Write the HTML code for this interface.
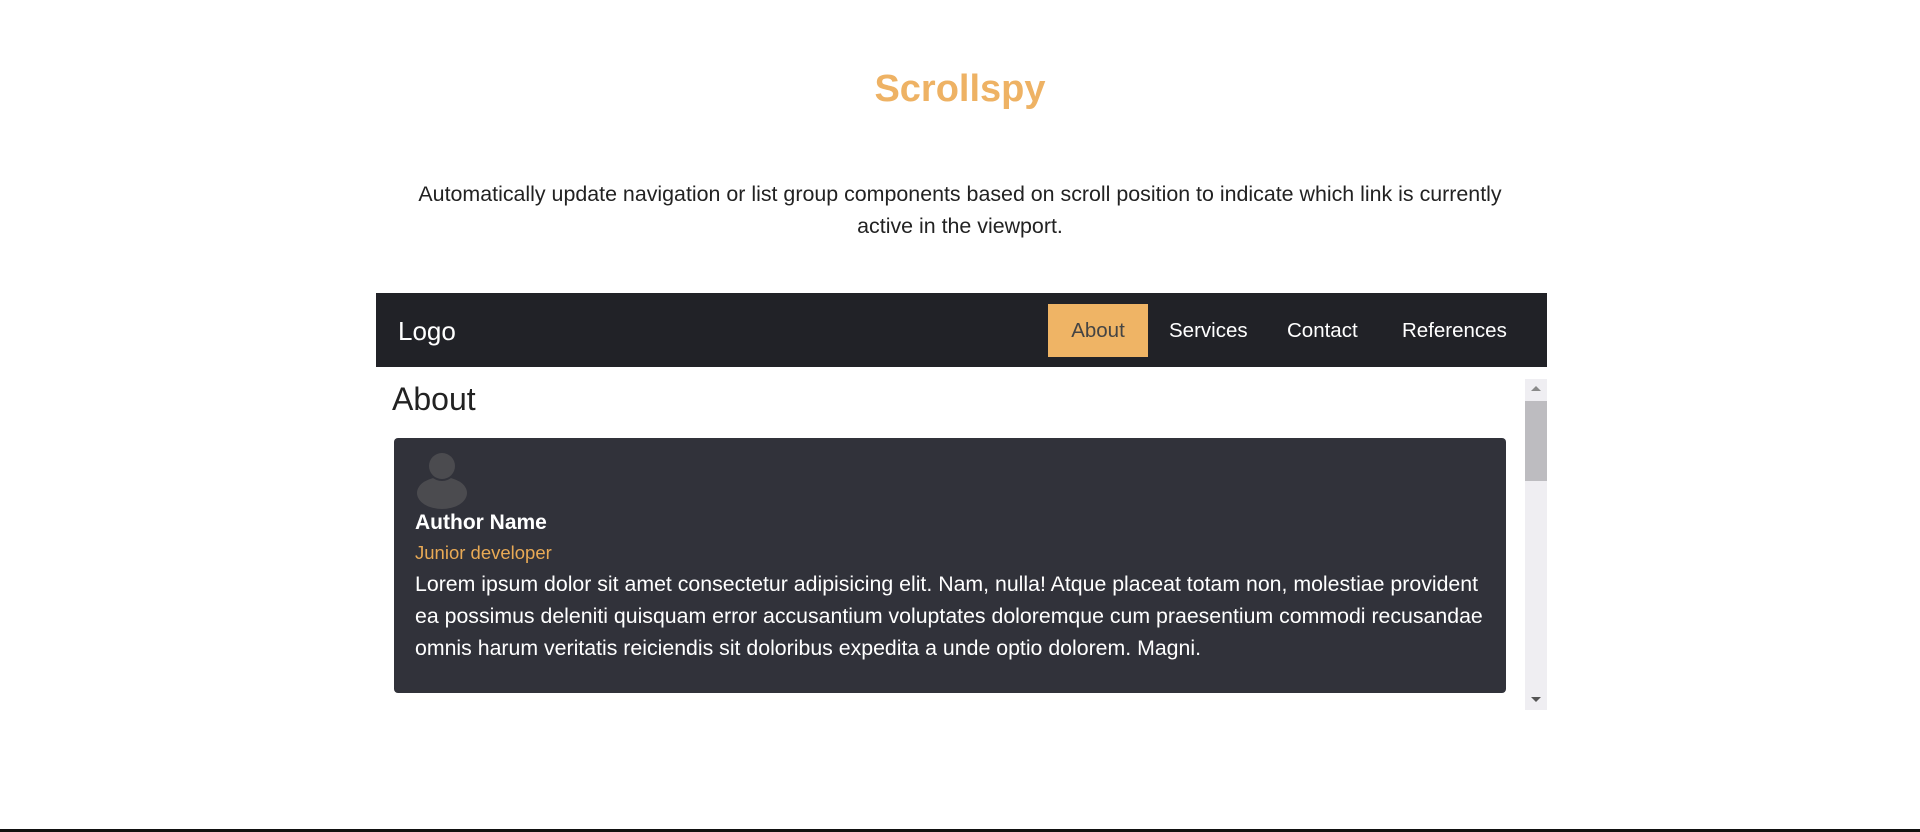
<!DOCTYPE html>
<html><head><meta charset="utf-8"><style>
*{margin:0;padding:0;box-sizing:border-box}
body{width:1920px;height:832px;background:#fff;font-family:"Liberation Sans",sans-serif;position:relative;overflow:hidden;color:#212529}
.a{position:absolute;white-space:nowrap}
h1{position:absolute;left:0;width:1920px;text-align:center;top:68px;font-size:38px;font-weight:bold;color:#eeb264}
.p{left:0;width:1920px;text-align:center;font-size:21.4px;line-height:32px;top:178px;color:#222}
.nav{position:absolute;left:376px;top:293px;width:1171px;height:74px;background:#212227}
.nav span{position:absolute;top:1px;line-height:74px;font-size:20.5px;color:#fff}
.btn{position:absolute;left:672px;top:11px;width:100px;height:53px;background:#efb465;color:#444;font-size:20.5px;line-height:53px;text-align:center}
.card{position:absolute;left:394px;top:438px;width:1112px;height:255px;background:#31323a;border-radius:4px}
.sb{position:absolute;left:1525px;top:379px;width:22px;height:331px;background:#efeef2}
.th{position:absolute;left:1525px;top:401px;width:22px;height:80px;background:#bdbcc0}
</style></head><body>
<h1>Scrollspy</h1>
<div class="a p">Automatically update navigation or list group components based on scroll position to indicate which link is currently<br>active in the viewport.</div>
<div class="nav">
<span style="left:22px;font-size:26px">Logo</span>
<div class="btn">About</div>
<span style="left:793px">Services</span>
<span style="left:911px">Contact</span>
<span style="left:1026px">References</span>
</div>
<div class="a" style="left:392px;top:381px;font-size:32px;color:#222">About</div>
<div class="card">
<svg class="a" style="left:22px;top:11px" width="52" height="60" viewBox="0 0 52 60"><ellipse cx="26" cy="44" rx="25" ry="16" fill="#4b4b4f"/><circle cx="26" cy="17" r="15" fill="#31323a"/><circle cx="26" cy="17" r="13" fill="#4b4b4f"/></svg>
<div class="a" style="left:21px;top:73px;font-size:21px;font-weight:bold;color:#fff">Author Name</div>
<div class="a" style="left:21px;top:104px;font-size:18.5px;color:#e9aa55">Junior developer</div>
<div class="a" style="left:21px;top:130px;font-size:21.3px;line-height:32px;color:#fff">Lorem ipsum dolor sit amet consectetur adipisicing elit. Nam, nulla! Atque placeat totam non, molestiae provident<br>ea possimus deleniti quisquam error accusantium voluptates doloremque cum praesentium commodi recusandae<br>omnis harum veritatis reiciendis sit doloribus expedita a unde optio dolorem. Magni.</div>
</div>
<div class="sb"></div><div class="th"></div>
<div class="a" style="left:1531px;top:386px;width:0;height:0;border-left:5px solid transparent;border-right:5px solid transparent;border-bottom:5px solid #8a8a8a"></div>
<div class="a" style="left:1531px;top:697px;width:0;height:0;border-left:5px solid transparent;border-right:5px solid transparent;border-top:5px solid #555"></div>
<div class="a" style="left:0;top:829px;width:1920px;height:3px;background:#111"></div>
</body></html>
